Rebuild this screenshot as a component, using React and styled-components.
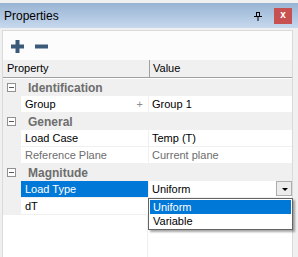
import React from "react"
import styled, { createGlobalStyle } from "styled-components"

const GlobalStyle = createGlobalStyle`
  html, body {
    margin: 0;
    padding: 0;
    background: #f0f0f0;
  }
  body {
    font-family: "Liberation Sans", Arial, sans-serif;
    font-size: 11px;
  }
`

const rows = [
  { type: "cat", label: "Identification" },
  { type: "prop", label: "Group", value: "Group 1", mark: true },
  { type: "cat", label: "General" },
  { type: "prop", label: "Load Case", value: "Temp (T)" },
  { type: "prop", label: "Reference Plane", value: "Current plane", muted: true },
  { type: "cat", label: "Magnitude" },
  { type: "prop", label: "Load Type", value: "Uniform", selected: true, combo: true },
  { type: "prop", label: "dT", value: "" },
]

export default function App() {
  return (
    <Window>
      <GlobalStyle />
      <TitleBar>
        <Title>Properties</Title>
        <PinIcon width="8" height="9" viewBox="0 0 8 9">
          <path d="M2 0.5h4M2.5 0.5v4M5.5 0.5v4M0 4.5h8M4 4.5v4.5" stroke="#000" strokeWidth="1" fill="none" />
        </PinIcon>
        <CloseButton>x</CloseButton>
      </TitleBar>
      <Panel>
        <Toolbar>
          <ToolIcon width="13" height="13" viewBox="0 0 13 13">
            <path d="M4.5 0h4v4.5H13v4H8.5V13h-4V8.5H0v-4h4.5z" fill="#3b5a7a" />
          </ToolIcon>
          <ToolIcon width="13" height="13" viewBox="0 0 13 13">
            <rect x="0" y="4.5" width="13" height="4" fill="#3b5a7a" />
          </ToolIcon>
        </Toolbar>
        <Grid>
          <Header>
            <HeadCell>Property</HeadCell>
            <HeadCell $value>Value</HeadCell>
          </Header>
          <Body>
            {rows.map((r) =>
              r.type === "cat" ? (
                <CatRow key={r.label}>
                  <Expander />
                  <CatLabel>{r.label}</CatLabel>
                </CatRow>
              ) : (
                <PropRow key={r.label}>
                  <NameCell $selected={r.selected} $muted={r.muted}>
                    <span>{r.label}</span>
                    {r.mark && <Mark>+</Mark>}
                  </NameCell>
                  <ValueCell $muted={r.muted}>
                    <span>{r.value}</span>
                    {r.combo && <ComboButton />}
                  </ValueCell>
                </PropRow>
              )
            )}
            <Filler />
          </Body>
          <DropList>
            <DropItem $active>Uniform</DropItem>
            <DropItem>Variable</DropItem>
          </DropList>
        </Grid>
      </Panel>
    </Window>
  )
}

const Window = styled.div`
  width: 298px;
  height: 257px;
  display: flex;
  flex-direction: column;
  background: #f0f0f0;
  padding-top: 3px;
  box-sizing: border-box;
  overflow: hidden;
`
const TitleBar = styled.div`
  height: 25px;
  flex: none;
  display: flex;
  align-items: center;
  padding-left: 4px;
  padding-right: 6px;
  background: linear-gradient(180deg, #98b3d2 0%, #c6d9ee 100%);
`
const Title = styled.div`
  flex: 1;
  font-size: 12px;
  color: #000;
`
const PinIcon = styled.svg`
  margin-right: 12px;
  margin-top: 1px;
`
const CloseButton = styled.div`
  width: 18px;
  height: 16px;
  background: #c75050;
  color: #fff;
  font-weight: bold;
  font-size: 10px;
  display: flex;
  align-items: center;
  justify-content: center;
  line-height: 1;
  padding-bottom: 2px;
  box-sizing: border-box;
`
const Panel = styled.div`
  flex: 1;
  margin: 2px 5px 0 2px;
  border: 1px solid #dadada;
  border-bottom: none;
  background: #fff;
  display: flex;
  flex-direction: column;
  min-height: 0;
`
const Toolbar = styled.div`
  height: 29px;
  flex: none;
  display: flex;
  align-items: center;
  gap: 11px;
  padding: 2px 0 0 8px;
  box-sizing: border-box;
  background: #fcfcfc;
`
const ToolIcon = styled.svg`
  display: block;
`
const Grid = styled.div`
  position: relative;
  flex: 1;
  display: flex;
  flex-direction: column;
  min-height: 0;
`
const Header = styled.div`
  height: 18px;
  flex: none;
  display: grid;
  grid-template-columns: 146px 1fr;
  background: #f0f0f0;
  border-bottom: 1px solid #a0a0a0;
  box-sizing: border-box;
`
const HeadCell = styled.div`
  padding-left: ${(p) => (p.$value ? "3px" : "4px")};
  line-height: 17px;
  color: #000;
  border-left: ${(p) => (p.$value ? "1px solid #a0a0a0" : "none")};
`
const Body = styled.div`
  flex: 1;
  display: flex;
  flex-direction: column;
  padding-top: 1px;
`
const CatRow = styled.div`
  height: 17px;
  flex: none;
  display: flex;
  align-items: center;
  background: #f0f0f0;
  padding-left: 4px;
  box-sizing: border-box;
`
const Expander = styled.div`
  width: 9px;
  height: 9px;
  border: 1px solid #919191;
  box-sizing: border-box;
  background: #fff;
  position: relative;
  margin-bottom: 1px;
  &::after {
    content: "";
    position: absolute;
    left: 1px;
    right: 1px;
    top: 3px;
    height: 1px;
    background: #5a5a5a;
  }
`
const CatLabel = styled.div`
  margin-left: 12px;
  font-weight: bold;
  font-size: 12px;
  color: #6d6d6d;
`
const PropRow = styled.div`
  height: 17px;
  flex: none;
  display: grid;
  grid-template-columns: 17px 127px 1fr;
  background: #f0f0f0;
  column-gap: 1px;
  padding-bottom: 1px;
  box-sizing: border-box;
  &::before {
    content: "";
  }
`
const NameCell = styled.div`
  display: flex;
  align-items: center;
  justify-content: space-between;
  padding-left: 4px;
  padding-right: 5px;
  background: ${(p) => (p.$selected ? "#0078d7" : "#fff")};
  color: ${(p) => (p.$selected ? "#fff" : p.$muted ? "#6d6d6d" : "#000")};
  white-space: nowrap;
  overflow: hidden;
`
const Mark = styled.span`
  color: #8a8a8a;
  font-size: 11px;
`
const ValueCell = styled.div`
  display: flex;
  align-items: center;
  justify-content: space-between;
  padding-left: 3px;
  background: #fff;
  color: ${(p) => (p.$muted ? "#6d6d6d" : "#000")};
  white-space: nowrap;
`
const ComboButton = styled.div`
  width: 16px;
  height: 15px;
  align-self: flex-start;
  box-sizing: border-box;
  border: 1px solid #adadad;
  background: #ececec;
  position: relative;
  &::after {
    content: "";
    position: absolute;
    left: 5px;
    top: 6px;
    border-left: 3px solid transparent;
    border-right: 3px solid transparent;
    border-top: 3px solid #000;
  }
`
const Filler = styled.div`
  flex: 1;
  background: #fff;
  margin-left: 144px;
  border-left: 1px solid #f0f0f0;
  border-top: 1px solid #f0f0f0;
`
const DropList = styled.div`
  position: absolute;
  left: 145px;
  top: 138px;
  width: 145px;
  height: 32px;
  box-sizing: border-box;
  background: #fff;
  border: 1px solid #646464;
  padding: 1px;
  box-shadow: 2px 2px 2px rgba(0, 0, 0, 0.35);
`
const DropItem = styled.div`
  height: 14px;
  line-height: 14px;
  padding-left: 3px;
  background: ${(p) => (p.$active ? "#0078d7" : "transparent")};
  color: ${(p) => (p.$active ? "#fff" : "#000")};
`
